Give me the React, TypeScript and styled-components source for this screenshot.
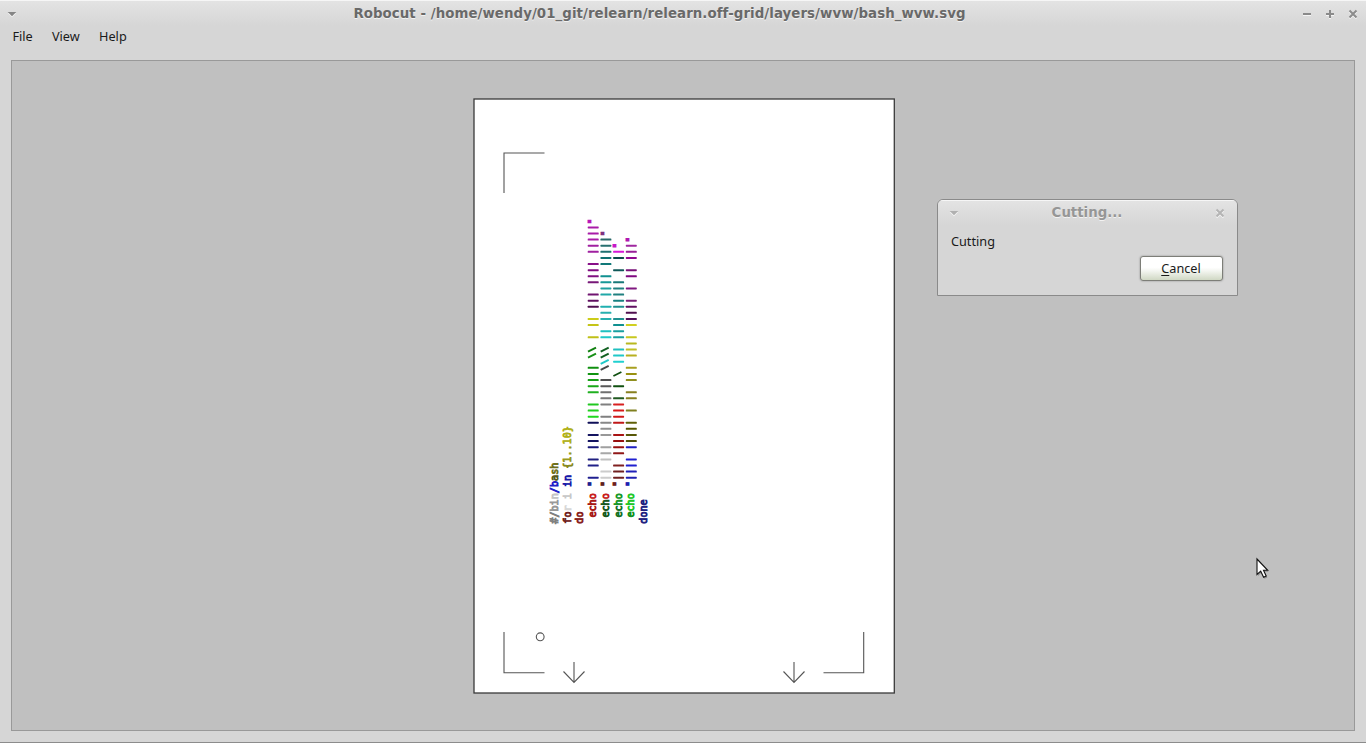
import React from 'react';
import styled, { createGlobalStyle } from 'styled-components';

const Global = createGlobalStyle`
  * { box-sizing: border-box; }
  body { margin: 0; background: #d6d6d6; }
`;

const Window = styled.div`
  position: relative;
  display: flex;
  flex-direction: column;
  width: 1366px;
  height: 743px;
  overflow: hidden;
  background: #d6d6d6;
  border-bottom: 1px solid #8c8c8c;
  font: 12.7px 'Noto Sans', 'Open Sans', sans-serif;
  color: #1a1a1a;
`;

const TitleBar = styled.header<{ $dim?: boolean }>`
  display: flex;
  align-items: center;
  flex: none;
  height: ${(p) => (p.$dim ? 25 : 26)}px;
  padding: 0 ${(p) => (p.$dim ? '12px 1px 11px' : '8px 0 7px')};
  background: linear-gradient(#e3e3e3, #d6d6d6);
  border-top: 1px solid #f6f6f6;
  color: ${(p) => (p.$dim ? '#969696' : '#696969')};
`;

const Title = styled.h1<{ $spacing: number }>`
  flex: 1;
  margin: 0;
  font-family: 'DejaVu Sans', sans-serif;
  font-size: 13.33px;
  font-weight: bold;
  letter-spacing: ${(p) => p.$spacing}px;
  line-height: 23px;
  text-align: center;
  white-space: nowrap;
  text-shadow: 0 1px 0 #f2f2f2;
`;

const Controls = styled.div`
  display: flex;
  gap: 13px;
`;

const Glyph = styled.svg`
  display: block;
  flex: none;
  filter: drop-shadow(0 1px 0 #f5f5f5);
`;

const MenuBar = styled.nav`
  display: flex;
  flex: none;
  gap: 19.3px;
  height: 34px;
  padding: 1px 12.4px 0;
  line-height: 18px;
`;

const Workspace = styled.main`
  display: flex;
  flex: none;
  align-items: center;
  justify-content: center;
  width: 1344px;
  height: 671px;
  margin-left: 11px;
  padding-left: 2px;
  background: #c0c0c0;
  border: 1px solid #999;
`;

const Sheet = styled.svg`
  display: block;
`;

const Dialog = styled.section`
  position: absolute;
  left: 937px;
  top: 199px;
  width: 301px;
  height: 97px;
  background: #d6d6d6;
  border: 1px solid #8a8a8a;
  border-radius: 6px 6px 0 0;
  overflow: hidden;
`;

const DialogBody = styled.div`
  display: flex;
  flex-direction: column;
  padding: 7px 14px 0 13px;
  line-height: 18px;
`;

const CancelButton = styled.button`
  align-self: flex-end;
  width: 83px;
  height: 25px;
  margin-top: 6px;
  padding: 0 1px 2px 0;
  border: 1px solid #7d7e78;
  border-radius: 3px;
  background: linear-gradient(#fff 45%, #f4f6f1 60%, #d0d8c4);
  box-shadow: 0 0 2px #888;
  font: inherit;
  color: inherit;
`;

const Mnemonic = styled.span`
  text-decoration: underline;
  text-underline-offset: 2px;
`;

const Pointer = styled.svg`
  position: absolute;
  left: 1254px;
  top: 556px;
`;

const PITCH = 6.105;
const rowY = (k: number) => 227.4 + PITCH * k;

type Mark = [number, string];
const bars: { x: number; marks: Mark[] }[] = [
  {
    x: 588,
    marks: [
      [0, '#a81ca8'], [1, '#a81ca8'], [2, '#a81ca8'], [3, '#a020a0'], [4, '#a020a0'], [6, '#881088'], [7, '#800c80'],
      [8, '#801080'], [9, '#781878'], [11, '#701470'], [12, '#601060'], [13, '#501050'], [15, '#cccc18'], [16, '#c4c418'],
      [18, '#c0c018'], [23, '#109010'], [24, '#109410'], [25, '#18a018'], [26, '#18a818'], [27, '#20b020'], [29, '#20c820'],
      [30, '#20d020'], [31, '#20d820'], [32, '#101058'], [34, '#141460'], [35, '#141460'], [36, '#181878'], [38, '#202080'],
      [39, '#202088'], [41, '#202090'],
    ],
  },
  {
    x: 600.7,
    marks: [
      [2, '#286868'], [3, '#287070'], [4, '#207070'], [5, '#107070'], [6, '#107878'], [8, '#109090'], [9, '#189898'],
      [10, '#20a0a0'], [11, '#20a8a8'], [13, '#20b0b0'], [14, '#28b0b0'], [15, '#28b0b0'], [17, '#20c0c0'], [18, '#20c8c8'],
      [25, '#505050'], [26, '#585858'], [27, '#707070'], [28, '#787878'], [29, '#808080'], [31, '#808080'], [32, '#888888'],
      [33, '#909090'], [34, '#989898'], [36, '#a0a0a0'], [37, '#a8a8a8'], [38, '#c0c0c0'], [40, '#cccccc'], [41, '#cccccc'],
    ],
  },
  {
    x: 613.4,
    marks: [
      [4, '#d818d8'], [5, '#0c4848'], [7, '#105858'], [9, '#187878'], [10, '#208080'], [11, '#208080'], [12, '#188080'],
      [13, '#209090'], [15, '#209090'], [16, '#109090'], [17, '#18a0a0'], [18, '#18a0a0'], [20, '#20c0c0'], [21, '#20c8c8'],
      [22, '#20d0d0'], [26, '#105010'], [28, '#205820'], [29, '#d82020'], [30, '#d81818'], [31, '#d01818'], [32, '#c01818'],
      [34, '#a81414'], [35, '#981010'], [36, '#981010'], [37, '#901818'], [39, '#802020'], [40, '#702020'], [41, '#702020'],
    ],
  },
  {
    x: 626.1,
    marks: [
      [3, '#a028a0'], [4, '#982098'], [5, '#900890'], [7, '#781078'], [8, '#800880'], [10, '#801880'], [12, '#782078'],
      [13, '#601060'], [14, '#501050'], [15, '#501058'], [16, '#d0d020'], [18, '#c8c820'], [19, '#b8b820'], [20, '#c0c028'],
      [21, '#b8b020'], [23, '#a8a020'], [24, '#989010'], [25, '#909020'], [27, '#888020'], [28, '#888020'], [30, '#808020'],
      [32, '#606008'], [33, '#585800'], [34, '#585808'], [35, '#505008'], [36, '#2020c0'], [38, '#2020d0'], [39, '#2020d0'],
      [40, '#2020b8'], [41, '#2020b0'],
    ],
  },
];

const strokes: [number, number, string][] = [
  [588, 20, '#108010'], [588, 21, '#189018'], [600.7, 20, '#106020'], [600.7, 21, '#106020'],
  [600.7, 22, '#20c8c8'], [600.7, 23, '#484848'], [613.4, 24, '#105010'],
];

// Each run: baseline x, starting y, then coloured text fragments read upwards.
const runs: { x: number; y: number; parts: [string, string][] }[] = [
  { x: 557.8, y: 523.7, parts: [['#/', '#808080'], ['bi', '#989898'], ['n', '#c4c4c4'], ['/b', '#2020c8'], ['a', '#58581c'], ['sh', '#70701c']] },
  { x: 570.5, y: 523.7, parts: [['fo', '#702020'], ['r', '#d8d8d8'], [' i ', '#c8c8c8'], ['in', '#1818a8'], [' {', '#88881c'], ['1..', '#989818'], ['10}', '#b0b018']] },
  { x: 583.3, y: 523.7, parts: [['do', '#882020']] },
  { x: 596, y: 517.6, parts: [['ech', '#a81818'], ['o', '#c81c1c']] },
  { x: 608.8, y: 517.6, parts: [['ech', '#185820'], ['o', '#c81c1c']] },
  { x: 621.5, y: 517.6, parts: [['ec', '#187028'], ['ho', '#189828']] },
  { x: 634.3, y: 517.6, parts: [['e', '#109020'], ['cho', '#20c828']] },
  { x: 647, y: 523.7, parts: [['done', '#202080']] },
];

const quotes: Mark[][] = [
  [[-1, '#b818b8'], [42, '#202090']],
  [[1, '#803080'], [42, '#602020']],
  [[3, '#c818c8'], [42, '#702020']],
  [[2, '#b018b0'], [42, '#2020b0']],
];

const CloseGlyph = ({ color }: { color: string }) => (
  <Glyph width="10" height="10" viewBox="0 0 10 10">
    <path d="M1.5 1.5 8.5 8.5M8.5 1.5 1.5 8.5" stroke={color} strokeWidth="2" fill="none" />
  </Glyph>
);

const ArrowGlyph = ({ color }: { color: string }) => (
  <Glyph width="10" height="6" viewBox="0 0 10 6">
    <path d="M0.7 1H9.3L5 5.3Z" fill={color} />
  </Glyph>
);

const CodeText = ({ x, y, parts, weight }: { x: number; y: number; parts: [string, string][]; weight: number }) => (
  <text
    transform={`translate(${x} ${y}) rotate(-90)`}
    fontFamily="'DejaVu Sans Mono', monospace"
    fontSize="10.14"
    xmlSpace="preserve"
  >
    {parts.map(([text, color], i) => (
      <tspan key={i} fill={color} stroke={color} strokeWidth={weight}>{text}</tspan>
    ))}
  </text>
);

const Drawing = () => (
  <Sheet width="422" height="596" viewBox="473 98 422 596">
    <rect x="474" y="99" width="420.3" height="594" fill="#fff" stroke="#3a3a3a" strokeWidth="1.3" />
    <g fill="none" stroke="#555" strokeWidth="1.1">
      <path d="M504 193V153H544.5M504 632V672.7H544.5M863.7 632V672.7H823.5" />
      <circle cx="540.2" cy="636.8" r="3.9" />
      <path d="M574 662V682.7M563.5 671.5 574 682.5 584.5 671.5M794 662V682.7M783.5 671.5 794 682.5 804.5 671.5" />
    </g>
    {bars.map((column) =>
      column.marks.map(([k, color]) => (
        <rect key={`${column.x}-${k}`} x={column.x - 0.3} y={rowY(k) - 1} width="11" height="2" rx="0.6" fill={color} />
      )),
    )}
    {strokes.map(([x, k, color]) => (
      <path key={`${x}-${k}`} d={`M${x} ${rowY(k) + 2.1}L${x + 8} ${rowY(k) - 1.9}`} stroke={color} strokeWidth="1.9" />
    ))}
    {runs.map((run) => (
      <CodeText key={`${run.x}-${run.y}`} {...run} weight={0.85} />
    ))}
    {quotes.map((column, i) =>
      column.map(([k, color]) => (
        <CodeText key={`${i}-${k}`} x={596 + 12.73 * i} y={rowY(k) + 3.1} parts={[['"', color]]} weight={0.9} />
      )),
    )}
  </Sheet>
);

export default function App() {
  return (
    <>
      <Global />
      <Window>
        <TitleBar>
          <ArrowGlyph color="#858585" />
          <Title $spacing={0.07}>Robocut - /home/wendy/01_git/relearn/relearn.off-grid/layers/wvw/bash_wvw.svg</Title>
          <Controls>
            <Glyph width="10" height="10"><path d="M1 5H9" stroke="#8a8a8a" strokeWidth="2" /></Glyph>
            <Glyph width="10" height="10"><path d="M1 5H9M5 1V9" stroke="#8a8a8a" strokeWidth="2" /></Glyph>
            <CloseGlyph color="#8c8c8c" />
          </Controls>
        </TitleBar>
        <MenuBar>
          <span>File</span>
          <span>View</span>
          <span>Help</span>
        </MenuBar>
        <Workspace>
          <Drawing />
        </Workspace>
        <Dialog>
          <TitleBar $dim>
            <ArrowGlyph color="#b0b0b0" />
            <Title $spacing={0}>Cutting...</Title>
            <CloseGlyph color="#b4b4b4" />
          </TitleBar>
          <DialogBody>
            <span>Cutting</span>
            <CancelButton><Mnemonic>C</Mnemonic>ancel</CancelButton>
          </DialogBody>
        </Dialog>
        <Pointer width="18" height="26" viewBox="0 0 18 26">
          <path d="M4 4.5V20L7.5 16.8 10.5 22.8 13.3 21.4 10.5 15.7H14.5Z" fill="#000" opacity="0.25" />
          <path d="M3 3V18.5L6.7 15.2 9.6 21.3 12.2 20 9.5 14.3H13.7Z" fill="#fff" stroke="#111" strokeWidth="1.1" />
        </Pointer>
      </Window>
    </>
  );
}
